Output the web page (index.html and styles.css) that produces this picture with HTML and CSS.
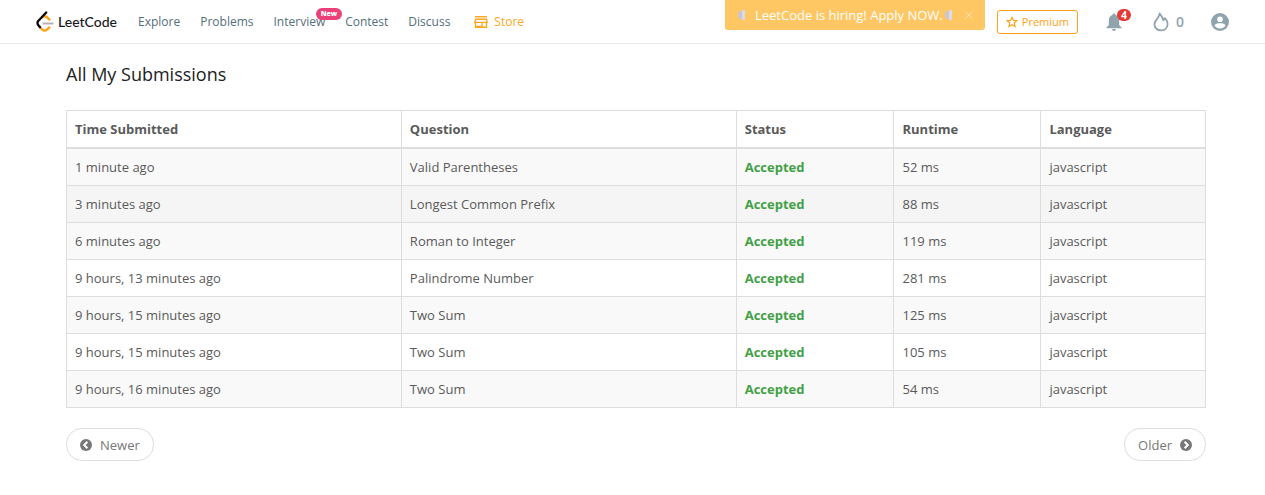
FILE: index.html
```html
<!DOCTYPE html>
<html lang="en">
<head>
<meta charset="utf-8">
<title>All My Submissions - LeetCode</title>
<link rel="stylesheet" href="styles.css">
</head>
<body>
<header class="navbar">
  <a class="brand" href="#">
    <svg class="brand-mark" viewBox="0 0 18 22" aria-hidden="true" fill="none" stroke-linecap="round" stroke-linejoin="round">
      <path d="M6.2 6.2 8.2 5.3Q9.6 5 10.8 6.2L13.4 8.6M3.2 15.2 6.2 18.6Q8.6 20.6 11 18.7L13.4 16.4" stroke="#ffa116" stroke-width="2.3"/>
      <path d="M7.4 12.5H16.6" stroke="#b3b3b3" stroke-width="2"/>
      <path d="M10.2 1.5 2.2 10Q.8 12 2.2 14L4 16.2" stroke="#070706" stroke-width="2.3"/>
    </svg>
    <span class="brand-name">LeetCode</span>
  </a>
  <nav class="links">
    <a href="#">Explore</a>
    <a href="#">Problems</a>
    <a class="with-tag" href="#">Interview<span class="tag">New</span></a>
    <a href="#">Contest</a>
    <a href="#">Discuss</a>
    <a class="store" href="#">
      <svg class="store-icon" viewBox="0 0 14 12" aria-hidden="true" fill="none" stroke="currentColor" stroke-width="1.4">
        <path d="M1 .8H13M1.6 3.2H12.4L13.2 6.4H.8ZM1.5 6.4V11.2H12.5V6.4M8 6.4V11.2M1.5 10.4H8"/>
      </svg>Store</a>
  </nav>
  <div class="tools">
    <div class="notice">
      <svg class="horn" viewBox="0 0 10 12" aria-hidden="true"><path d="M1 3.5 6 1V11L1 8.5Z" fill="#c9c5d2"/><path d="M5 1.5 8 .8V11.2L5 10.5Z" fill="#ddd9e6"/></svg>
      <a href="#">LeetCode is hiring! Apply NOW.</a>
      <svg class="horn" viewBox="0 0 10 12" aria-hidden="true"><path d="M1 3.5 6 1V11L1 8.5Z" fill="#c9c5d2"/><path d="M5 1.5 8 .8V11.2L5 10.5Z" fill="#ddd9e6"/></svg>
      <button class="close" type="button" aria-label="Close">
        <svg viewBox="0 0 8 8" aria-hidden="true"><path d="M.5.5 7.5 7.5M7.5.5.5 7.5" stroke="currentColor" fill="none"/></svg>
      </button>
    </div>
    <a class="premium" href="#">
      <svg class="star" viewBox="0 0 12 12" aria-hidden="true"><path d="M6 1.2 7.4 4.4 11 4.7 8.3 7 9.1 10.6 6 8.7 2.9 10.6 3.7 7 1 4.7 4.6 4.4Z" fill="none" stroke="currentColor" stroke-width="1.1"/></svg>Premium</a>
    <button class="bell" type="button" aria-label="Notifications">
      <svg viewBox="0 0 16 18" aria-hidden="true" fill="currentColor"><path d="M8 .5C9 .5 9.5 1.1 9.5 2.1 12 2.8 13.2 4.9 13.2 7.4V12L15.5 14.5V15.3H.5V14.5L2.8 12V7.4C2.8 4.9 4 2.8 6.5 2.1 6.5 1.1 7 .5 8 .5ZM6 16H10Q9.8 17.9 8 17.9T6 16Z"/></svg>
      <span class="count">4</span>
    </button>
    <a class="streak" href="#">
      <svg viewBox="0 0 16 20" aria-hidden="true" fill="none" stroke="currentColor" stroke-width="1.8" stroke-linejoin="round"><path d="M6.6 1.5C7.7 3.5 10 5 10.2 8.1 11.1 7.9 11.8 7.2 12 6.1 13.8 8 14.8 10.3 14.6 12.5 14.3 16 11.5 18.4 8 18.4S1.4 16 1.4 12.2C1.4 8.2 6.2 6.5 6.6 1.5Z"/></svg>0</a>
    <button class="account" type="button" aria-label="Account">
      <svg viewBox="0 0 18 18" aria-hidden="true"><circle cx="9" cy="9" r="9" fill="currentColor"/><circle cx="9" cy="6.2" r="2.8" fill="#fff"/><path d="M3.5 12.6C4 10.8 6.5 10.3 9 10.3S14 10.8 14.5 12.6C13.2 14.5 11.3 15.5 9 15.5S4.8 14.5 3.5 12.6Z" fill="#fff"/></svg>
    </button>
  </div>
</header>
<main class="content">
  <h1>All My Submissions</h1>
  <table class="submissions">
    <colgroup><col class="c-time"><col class="c-question"><col class="c-status"><col class="c-runtime"><col></colgroup>
    <thead>
      <tr><th scope="col">Time Submitted</th><th scope="col">Question</th><th scope="col">Status</th><th scope="col">Runtime</th><th scope="col">Language</th></tr>
    </thead>
    <tbody>
      <tr><td>1 minute ago</td><td><a href="#">Valid Parentheses</a></td><td><a class="accepted" href="#">Accepted</a></td><td>52 ms</td><td>javascript</td></tr>
      <tr class="active"><td>3 minutes ago</td><td><a href="#">Longest Common Prefix</a></td><td><a class="accepted" href="#">Accepted</a></td><td>88 ms</td><td>javascript</td></tr>
      <tr><td>6 minutes ago</td><td><a href="#">Roman to Integer</a></td><td><a class="accepted" href="#">Accepted</a></td><td>119 ms</td><td>javascript</td></tr>
      <tr><td>9 hours, 13 minutes ago</td><td><a href="#">Palindrome Number</a></td><td><a class="accepted" href="#">Accepted</a></td><td>281 ms</td><td>javascript</td></tr>
      <tr><td>9 hours, 15 minutes ago</td><td><a href="#">Two Sum</a></td><td><a class="accepted" href="#">Accepted</a></td><td>125 ms</td><td>javascript</td></tr>
      <tr><td>9 hours, 15 minutes ago</td><td><a href="#">Two Sum</a></td><td><a class="accepted" href="#">Accepted</a></td><td>105 ms</td><td>javascript</td></tr>
      <tr><td>9 hours, 16 minutes ago</td><td><a href="#">Two Sum</a></td><td><a class="accepted" href="#">Accepted</a></td><td>54 ms</td><td>javascript</td></tr>
    </tbody>
  </table>
  <nav class="pager" aria-label="Pages">
    <a href="#"><svg viewBox="0 0 12 12" aria-hidden="true"><circle cx="6" cy="6" r="6" fill="currentColor"/><path d="M7.4 2.8 4.2 6 7.4 9.2" fill="none" stroke="#fff" stroke-width="2"/></svg>Newer</a>
    <a href="#">Older<svg viewBox="0 0 12 12" aria-hidden="true"><circle cx="6" cy="6" r="6" fill="currentColor"/><path d="M4.6 2.8 7.8 6 4.6 9.2" fill="none" stroke="#fff" stroke-width="2"/></svg></a>
  </nav>
</main>
</body>
</html>
```
FILE: styles.css
```css
* { box-sizing: border-box; }
body {
  margin: 0;
  background: #fff;
  color: #5a5a5a;
  font-family: "Open Sans", "Noto Sans", sans-serif;
  font-size: 13px;
  line-height: 20px;
}
a { color: inherit; text-decoration: none; }
button { padding: 0; border: 0; background: none; color: inherit; font: inherit; cursor: pointer; }
svg { display: block; flex: none; }

.navbar {
  display: flex;
  align-items: center;
  height: 44px;
  padding: 0 36px;
  border-bottom: 1px solid #e8e8e8;
  color: #546e7a;
}
.brand { display: flex; align-items: center; gap: 4px; margin-right: 21px; color: #1a1a1a; }
.brand-mark { width: 18px; height: 22px; }
.brand-name { font-family: Lato, sans-serif; font-size: 14px; font-weight: 500; }
.links { display: flex; gap: 20px; font-size: 12px; }
.with-tag { position: relative; }
.tag {
  position: absolute;
  top: -4px;
  right: -17px;
  padding: 0 5px;
  border-radius: 6px;
  background: #ec407a;
  color: #fff;
  font-size: 7px;
  font-weight: 800;
  line-height: 12px;
}
.store { display: flex; align-items: center; gap: 6px; margin-left: 4px; color: #f9a825; }
.store-icon { width: 14px; height: 12px; }

.tools { display: flex; align-items: center; height: 44px; margin-left: auto; color: #90a4ae; }
.notice {
  display: flex;
  align-self: flex-start;
  align-items: center;
  height: 30px;
  margin-right: 12px;
  padding: 0 12px;
  border-radius: 0 0 3px 3px;
  background: #ffc764;
  color: #fff;
  font-size: 13px;
}
.notice a { margin: 0 1px 0 8px; }
.horn { width: 10px; height: 12px; }
.close { margin-left: 11px; color: #ffe2ae; }
.close svg { width: 8px; height: 8px; }
.premium {
  display: flex;
  align-items: center;
  gap: 4px;
  height: 24px;
  padding: 0 8px;
  border: 1px solid #ffa116;
  border-radius: 3px;
  color: #ffa116;
  font-size: 11px;
}
.star { width: 12px; height: 12px; }
.bell { position: relative; margin-left: 28px; }
.bell svg { width: 16px; height: 18px; }
.count {
  position: absolute;
  top: -4px;
  left: 11px;
  width: 14px;
  border-radius: 6px;
  background: #e53935;
  color: #fff;
  font-size: 10px;
  font-weight: 700;
  line-height: 12px;
  text-align: center;
}
.streak { display: flex; align-items: center; gap: 7px; margin-left: 31px; font-size: 14px; font-weight: 600; }
.streak svg { width: 16px; height: 20px; }
.account { margin-left: 27px; }
.account svg { width: 18px; height: 18px; }

.content { padding: 18px 59px 34px 66px; }
h1 { margin: 0 0 24px; color: #212121; font-size: 18px; font-weight: 400; line-height: 24px; }
.submissions {
  width: 100%;
  border: 1px solid #ddd;
  border-collapse: collapse;
  table-layout: fixed;
}
.c-time, .c-question { width: 29.4%; }
.c-status { width: 13.85%; }
.c-runtime { width: 12.9%; }
th, td { padding: 8px; border: 1px solid #ddd; text-align: left; }
th { border-bottom-width: 2px; font-weight: 700; }
tbody tr:nth-child(odd) { background: #f9f9f9; }
tbody .active { background: #f5f5f5; }
.accepted { color: #43a047; font-weight: 700; }
.pager { display: flex; justify-content: space-between; margin-top: 20px; color: #777; }
.pager a {
  display: flex;
  align-items: center;
  gap: 8px;
  height: 33px;
  padding: 0 13px;
  border: 1px solid #ddd;
  border-radius: 16px;
}
.pager svg { width: 12px; height: 12px; }
```
